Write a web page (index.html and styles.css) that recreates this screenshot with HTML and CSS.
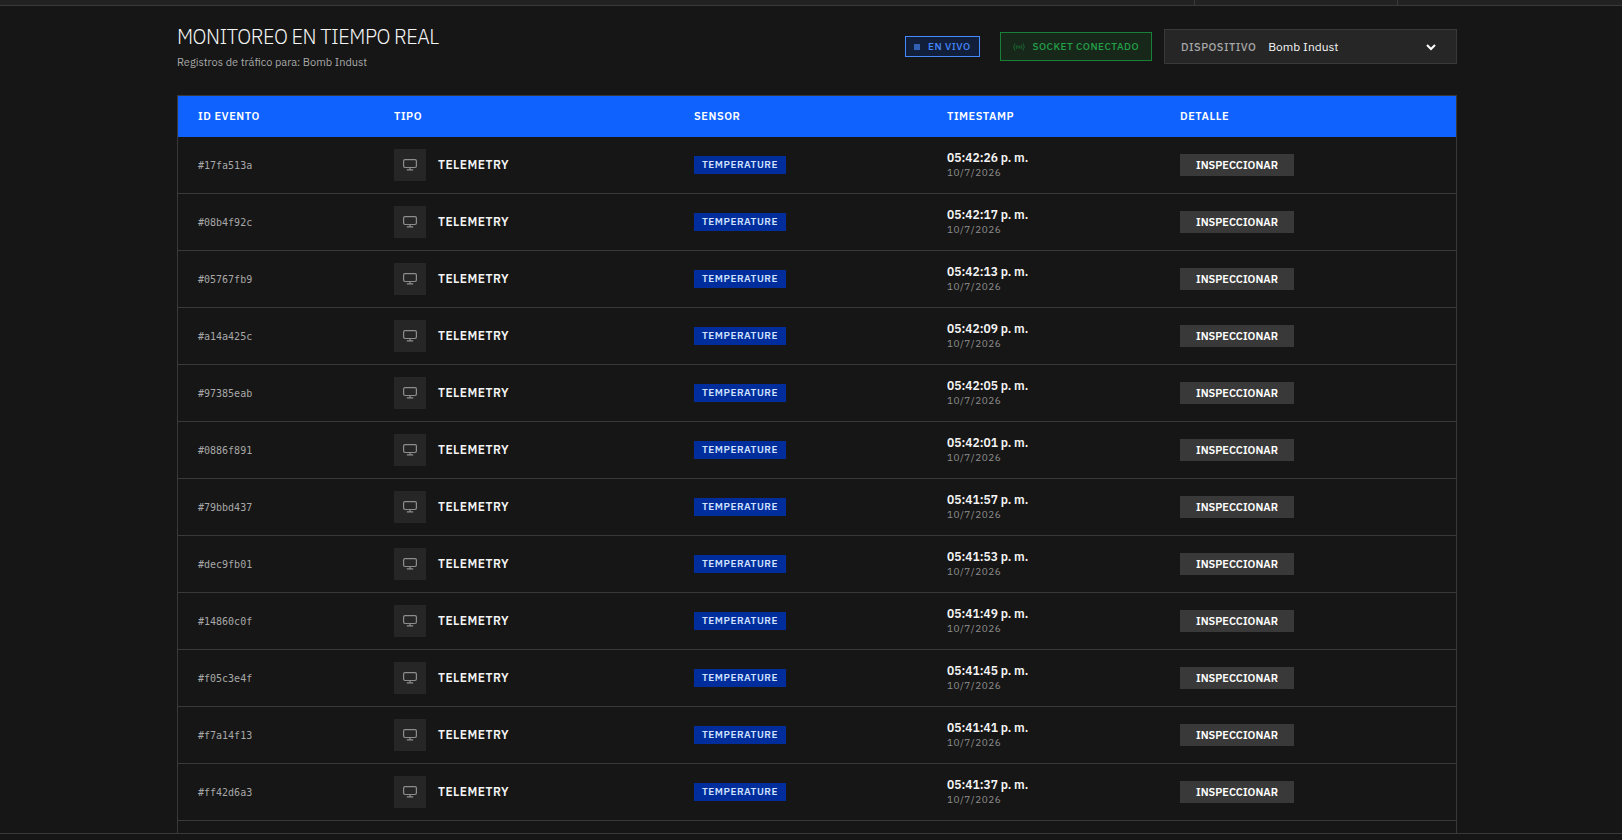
FILE: index.html
```
<!DOCTYPE html>
<html lang="es">
<head>
    <meta charset="UTF-8">
    <meta name="viewport" content="width=device-width, initial-scale=1.0">
    <title>Monitoreo en Tiempo Real</title>
    <link rel="stylesheet" href="styles.css">
</head>
<body>
    <svg class="sprite" aria-hidden="true">
        <symbol id="icon-monitor" viewBox="0 0 16 16">
            <rect x="1.6" y="2.6" width="12.8" height="7.9" rx="1.4"/>
            <path d="M8 10.5v2.4M4.8 12.9h6.4"/>
        </symbol>
    </svg>

    <div class="topbar">
        <div class="topbar-cell"></div>
        <div class="topbar-end"></div>
    </div>

    <main class="content">
        <div class="container">
            <header class="page-header">
                <div>
                    <h1>MONITOREO EN TIEMPO REAL</h1>
                    <p class="subtitle">Registros de tráfico para: Bomb Indust</p>
                </div>
                <div class="controls">
                    <span class="badge-live"><i class="live-dot"></i>EN VIVO</span>
                    <div class="socket-status">
                        <svg class="socket-icon" viewBox="0 0 24 24" aria-hidden="true">
                            <circle cx="12" cy="12" r="2"/>
                            <path d="M8 16a6 6 0 0 1 0-8M16 8a6 6 0 0 1 0 8M4 19a12 12 0 0 1 0-14M20 5a12 12 0 0 1 0 14"/>
                        </svg>
                        SOCKET CONECTADO
                    </div>
                    <div class="device-picker">
                        <label for="device">DISPOSITIVO</label>
                        <select id="device">
                            <option>Bomb Indust</option>
                        </select>
                        <svg class="chevron" viewBox="0 0 10 10" aria-hidden="true"><path d="M1 3l4 4 4-4"/></svg>
                    </div>
                </div>
            </header>

            <table class="events">
                <colgroup>
                    <col class="col-id">
                    <col class="col-type">
                    <col class="col-sensor">
                    <col class="col-time">
                    <col>
                </colgroup>
                <thead>
                    <tr>
                        <th>ID EVENTO</th>
                        <th>TIPO</th>
                        <th>SENSOR</th>
                        <th>TIMESTAMP</th>
                        <th>DETALLE</th>
                    </tr>
                </thead>
                <tbody id="eventRows"></tbody>
            </table>
        </div>
    </main>
    <footer class="bottombar"></footer>

    <script src="script.js"></script>
</body>
</html>
```

FILE: styles.css
```
* {
    box-sizing: border-box;
}
body {
    margin: 0;
    height: 100vh;
    display: flex;
    flex-direction: column;
    overflow: hidden;
    background-color: #161616;
    color: #f4f4f4;
    font-family: "IBM Plex Sans", "Noto Sans", sans-serif;
    font-size: 14px;
}
.sprite {
    display: none;
}
.topbar {
    flex: none;
    display: flex;
    justify-content: flex-end;
    height: 6px;
    background-color: #222;
    border-bottom: 1px solid #393939;
}
.topbar-cell {
    width: 204px;
    border-left: 1px solid #393939;
    border-right: 1px solid #393939;
}
.topbar-end {
    width: 224px;
}
.content {
    flex: 1;
    min-height: 0;
    overflow: hidden;
    padding-left: 12px;
}
.container {
    max-width: 1280px;
    margin: 0 auto;
}
.page-header {
    display: flex;
    justify-content: space-between;
    align-items: flex-start;
    height: 89px;
    padding-top: 16px;
}
h1 {
    margin: 0;
    font-size: 20px;
    font-weight: 300;
    line-height: 30px;
    letter-spacing: -0.025em;
}
.subtitle {
    margin: 2px 0 0;
    font-size: 11px;
    line-height: 16px;
    color: #a8a8a8;
}
.controls {
    display: flex;
    align-items: center;
    padding-top: 7px;
    font-size: 10px;
    font-weight: 500;
    letter-spacing: 0.05em;
}
.badge-live {
    display: flex;
    align-items: center;
    gap: 8px;
    height: 21px;
    padding: 0 8px;
    margin-right: 20px;
    border: 1px solid #4589ff;
    background-color: #121f3b;
    color: #4589ff;
}
.live-dot {
    width: 6px;
    height: 6px;
    background-color: #3260b3;
}
.socket-status {
    display: flex;
    align-items: center;
    gap: 8px;
    height: 29px;
    padding: 0 12px;
    margin-right: 12px;
    border: 1px solid #198038;
    background-color: #17281b;
    color: #24a148;
}
.socket-icon {
    width: 12px;
    height: 12px;
    fill: none;
    stroke: #1d6331;
    stroke-width: 2;
}
.device-picker {
    position: relative;
    display: flex;
    align-items: center;
    gap: 12px;
    width: 293px;
    height: 35px;
    padding: 0 16px;
    border: 1px solid #393939;
    background-color: #262626;
}
.device-picker label {
    font-size: 11px;
    color: #a8a8a8;
}
.device-picker select {
    flex: 1;
    min-width: 0;
    padding: 0;
    border: none;
    appearance: none;
    background: transparent;
    color: #f4f4f4;
    font-family: inherit;
    font-size: 12px;
}
.chevron {
    position: absolute;
    right: 20px;
    width: 10px;
    height: 10px;
    fill: none;
    stroke: #fff;
    stroke-width: 2;
    pointer-events: none;
}
.events {
    width: 100%;
    table-layout: fixed;
    border-collapse: separate;
    border-spacing: 0;
    border: 1px solid #393939;
}
.col-id {
    width: 196px;
}
.col-type {
    width: 300px;
}
.col-sensor {
    width: 253px;
}
.col-time {
    width: 233px;
}
th {
    height: 41px;
    padding: 0 20px 2px;
    background-color: #0f62fe;
    color: #fff;
    font-size: 11px;
    font-weight: 600;
    letter-spacing: 0.05em;
    text-align: left;
}
td {
    height: 57px;
    padding: 0 20px;
    border-bottom: 1px solid #393939;
}
.event-id {
    font-family: "DejaVu Sans Mono", monospace;
    font-size: 10px;
    color: #a8a8a8;
}
.event-type {
    display: flex;
    align-items: center;
    gap: 12px;
    font-size: 12px;
    font-weight: 600;
    line-height: 18px;
    letter-spacing: 0.04em;
}
.type-icon {
    display: flex;
    align-items: center;
    justify-content: center;
    width: 32px;
    height: 32px;
    background-color: #262626;
}
.type-icon svg {
    width: 16px;
    height: 16px;
    fill: none;
    stroke: #8d8d8d;
    stroke-width: 1.2;
}
.sensor-tag {
    display: block;
    width: fit-content;
    padding: 0 8px;
    background-color: #002d9c;
    color: #d0e2ff;
    font-size: 10px;
    font-weight: 600;
    line-height: 18px;
    letter-spacing: 0.05em;
}
.time {
    font-size: 12px;
    font-weight: 600;
    line-height: 16px;
}
.date {
    font-size: 10px;
    line-height: 14px;
    letter-spacing: 0.05em;
    color: #8d8d8d;
}
.btn-inspect {
    display: block;
    height: 22px;
    padding: 0 16px;
    border: none;
    background-color: #393939;
    color: #fff;
    font-family: inherit;
    font-size: 11px;
    font-weight: 600;
    cursor: pointer;
}
.btn-inspect:hover {
    background-color: #4c4c4c;
}
.bottombar {
    flex: none;
    height: 7px;
    border-top: 1px solid #393939;
}
```

FILE: script.js
```
const events = [
    { id: '17fa513a', time: '05:42:26' },
    { id: '08b4f92c', time: '05:42:17' },
    { id: '05767fb9', time: '05:42:13' },
    { id: 'a14a425c', time: '05:42:09' },
    { id: '97385eab', time: '05:42:05' },
    { id: '0886f891', time: '05:42:01' },
    { id: '79bbd437', time: '05:41:57' },
    { id: 'dec9fb01', time: '05:41:53' },
    { id: '14860c0f', time: '05:41:49' },
    { id: 'f05c3e4f', time: '05:41:45' },
    { id: 'f7a14f13', time: '05:41:41' },
    { id: 'ff42d6a3', time: '05:41:37' }
];

const eventRows = document.getElementById('eventRows');

events.forEach(event => {
    const row = document.createElement('tr');
    row.innerHTML = `
        <td class="event-id">#${event.id}</td>
        <td>
            <div class="event-type">
                <span class="type-icon"><svg aria-hidden="true"><use href="#icon-monitor"/></svg></span>
                TELEMETRY
            </div>
        </td>
        <td><span class="sensor-tag">TEMPERATURE</span></td>
        <td>
            <div class="time">${event.time} p. m.</div>
            <div class="date">10/7/2026</div>
        </td>
        <td><button type="button" class="btn-inspect">INSPECCIONAR</button></td>
    `;
    eventRows.appendChild(row);
});

// Empty row for the next event below the fold
const nextRow = document.createElement('tr');
nextRow.innerHTML = '<td></td><td></td><td></td><td></td><td></td>';
eventRows.appendChild(nextRow);
```
